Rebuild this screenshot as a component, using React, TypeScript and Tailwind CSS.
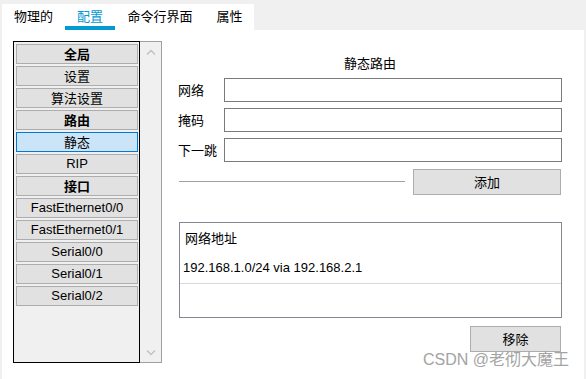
import { useState } from 'react';

const cjk = "font-['Noto_Sans_CJK_SC','Liberation_Sans',sans-serif]";

const tabs = [
  { label: '物理的', width: 'w-[63px]' },
  { label: '配置', width: 'w-[50px]' },
  { label: '命令行界面', width: 'w-[90px]' },
  { label: '属性', width: 'w-[49px]' },
];

const items = [
  { label: '全局', bold: true },
  { label: '设置' },
  { label: '算法设置' },
  { label: '路由', bold: true },
  { label: '静态' },
  { label: 'RIP' },
  { label: '接口', bold: true },
  { label: 'FastEthernet0/0' },
  { label: 'FastEthernet0/1' },
  { label: 'Serial0/0' },
  { label: 'Serial0/1' },
  { label: 'Serial0/2' },
];

const fields = ['网络', '掩码', '下一跳'];

export default function App() {
  const [activeTab, setActiveTab] = useState(1);
  const [selected, setSelected] = useState('静态');

  return (
    <div className={`relative w-[586px] h-[379px] bg-[#f0f0f0] pl-[2px] flex flex-col text-black ${cjk}`}>
      {/* tab strip */}
      <div className="h-[30px] pt-[4px] flex">
        <div className="flex bg-white h-[26px]">
          {tabs.map((t, i) => (
            <button
              key={t.label}
              onClick={() => setActiveTab(i)}
              className={`${t.width} h-[26px] flex flex-col items-center text-[13px] leading-[16px] pt-[4px] ${
                activeTab === i ? 'text-[#0399d3]' : 'text-black'
              }`}
            >
              <span>{t.label}</span>
              {activeTab === i && <span className="mt-auto w-full h-[4px] bg-[#0399d3]" />}
            </button>
          ))}
        </div>
      </div>

      {/* main panel */}
      <div className="flex-1 w-[582px] bg-white flex pl-[11px] pt-[11px]">
        {/* left list */}
        <div className="flex h-[322px]">
          <div className="w-[127px] border border-black bg-[#f0f0f0] pl-[2px] pr-[1px] pt-[2px] flex flex-col gap-[2px]">
            {items.map((it) => (
              <button
                key={it.label}
                onClick={() => setSelected(it.label)}
                className={`h-[20px] border flex items-center justify-center text-[13px] leading-[16px] ${
                  it.label === selected
                    ? 'bg-[#cce4f7] border-[#0078d7]'
                    : 'bg-[#e1e1e1] border-[#adadad]'
                } ${it.bold ? 'font-bold' : ''} ${
                  /^[A-Za-z]/.test(it.label) ? "font-['Liberation_Sans',sans-serif] text-[13.5px]" : ''
                }`}
              >
                {it.label}
              </button>
            ))}
          </div>
          <div className="w-[22px] bg-[#f0f0f0] border border-l-0 border-[#a0a0a0] flex flex-col items-center justify-between pt-[7px] pb-[6px]">
            <svg width="10" height="6" viewBox="0 0 10 6" fill="none" stroke="#c2c2c2" strokeWidth="1.5">
              <path d="M1 5.5 L5 1.5 L9 5.5" />
            </svg>
            <svg width="10" height="6" viewBox="0 0 10 6" fill="none" stroke="#c2c2c2" strokeWidth="1.5">
              <path d="M1 0.5 L5 4.5 L9 0.5" />
            </svg>
          </div>
        </div>

        {/* right form */}
        <div className="ml-[16px] w-[384px] flex flex-col">
          <div className="mt-[14px] h-[16px] text-center text-[13px] leading-[16px]">静态路由</div>

          <div className="mt-[7px] flex flex-col gap-[6px]">
            {fields.map((f) => (
              <div key={f} className="flex items-center h-[24px]">
                <span className="w-[46px] text-[13px] leading-[16px]">{f}</span>
                <input className="w-[338px] h-[24px] border border-[#7a7a7a] bg-white outline-none px-1 text-[13px]" />
              </div>
            ))}
          </div>

          <div className="mt-[7px] h-[26px] flex items-center">
            <div className="ml-[1px] w-[226px] h-[2px] border-t border-[#a0a0a0] border-b border-b-white" />
            <button className="ml-[8px] w-[148px] h-[26px] bg-[#e1e1e1] border border-[#adadad] text-[13px]">
              添加
            </button>
          </div>

          <div className="mt-[27px] ml-[1px] w-[383px] h-[96px] border border-[#828790] flex flex-col">
            <div className="h-[29px] flex items-center pl-[5px] text-[13px] leading-[16px]">网络地址</div>
            <div className="h-[32px] flex items-center pl-[3px] border-b border-[#d9d9d9] font-['Liberation_Sans',sans-serif] text-[13px]">
              192.168.1.0/24 via 192.168.2.1
            </div>
          </div>

          <div className="mt-[8px] flex justify-end pr-[1px]">
            <button className="w-[91px] h-[26px] bg-[#e1e1e1] border border-[#adadad] text-[13px]">移除</button>
          </div>
        </div>
      </div>

      {/* watermark */}
      <div className="absolute left-[423px] top-[350px] text-[16px] leading-[20px] text-[#a3a3a3] font-['Liberation_Sans','Noto_Sans_CJK_SC',sans-serif] pointer-events-none">
        CSDN @老彻大魔王
      </div>
    </div>
  );
}
